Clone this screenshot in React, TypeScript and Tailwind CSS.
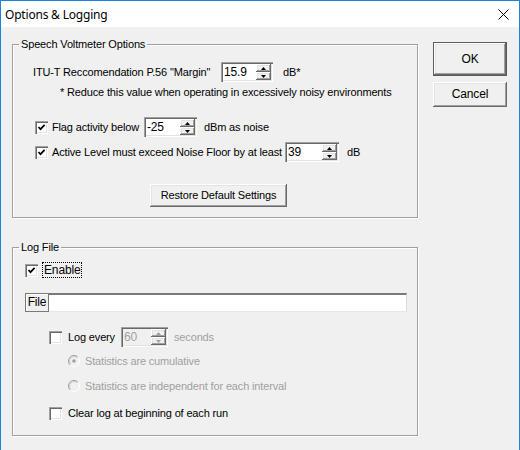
import React from "react";

const sunken =
  "shadow-[inset_1px_1px_0_#a0a0a0,inset_2px_2px_0_#696969,inset_-1px_-1px_0_#ffffff,inset_-2px_-2px_0_#e3e3e3]";
const raised =
  "shadow-[inset_-1px_-1px_0_#696969,inset_1px_1px_0_#ffffff,inset_-2px_-2px_0_#a0a0a0,inset_2px_2px_0_#e3e3e3]";

function Check({ on = false }: { on?: boolean }) {
  return (
    <span className={`flex h-[13px] w-[13px] shrink-0 items-center justify-center bg-white ${sunken}`}>
      {on && (
        <svg width="9" height="9" viewBox="0 0 9 9">
          <path d="M1.5 4 L3.5 6.2 L7.6 1.8" fill="none" stroke="#000" strokeWidth="1.7" />
        </svg>
      )}
    </span>
  );
}

function Radio({ on = false }: { on?: boolean }) {
  return (
    <svg width="12" height="12" viewBox="0 0 12 12" className="shrink-0">
      <circle cx="6" cy="6" r="5.5" fill="#f0f0f0" />
      <path d="M2.1 9.9 A5.5 5.5 0 0 1 9.9 2.1" fill="none" stroke="#a0a0a0" />
      <path d="M9.9 2.1 A5.5 5.5 0 0 1 2.1 9.9" fill="none" stroke="#ffffff" />
      <path d="M2.8 9.2 A4.5 4.5 0 0 1 9.2 2.8" fill="none" stroke="#c8c8c8" />
      {on && <circle cx="6" cy="6" r="1.8" fill="#a0a0a0" />}
    </svg>
  );
}

function Arrow({ up }: { up?: boolean }) {
  return (
    <svg width="5" height="3" viewBox="0 0 5 3">
      <path d={up ? "M2.5 0 L5 3 L0 3 Z" : "M0 0 L5 0 L2.5 3 Z"} fill="currentColor" />
    </svg>
  );
}

function Spin({ value, w = "w-[53px]", off = false }: { value: string; w?: string; off?: boolean }) {
  return (
    <div className={`flex h-[20px] shrink-0 p-[2px] ${w} ${off ? "bg-[#f0f0f0] text-[#a0a0a0]" : "bg-white text-black"} ${sunken}`}>
      <span className="flex-1 pl-[1px] text-[12px] leading-[16px]">{value}</span>
      <div className={`flex w-[15px] flex-col ${off ? "text-[#a0a0a0]" : "text-black"}`}>
        <span className={`flex flex-1 items-center justify-center bg-[#f0f0f0] ${raised}`}>
          <Arrow up />
        </span>
        <span className={`flex flex-1 items-center justify-center bg-[#f0f0f0] ${raised}`}>
          <Arrow />
        </span>
      </div>
    </div>
  );
}

function Group({ title, className, children }: { title: string; className: string; children: React.ReactNode }) {
  return (
    <fieldset className={`w-[406px] border border-[#a0a0a0] shadow-[1px_1px_0_#ffffff,inset_1px_1px_0_#ffffff] ${className}`}>
      <legend className="ml-[6px] px-[2px] leading-[13px]">{title}</legend>
      {children}
    </fieldset>
  );
}

export default function App() {
  return (
    <div className="flex h-[450px] w-[520px] flex-col overflow-hidden border-x border-t border-[#1883d7] bg-[#f0f0f0] font-['Liberation_Sans',Arial,sans-serif] text-[11px] leading-[13px] tracking-[-0.15px] text-black">
      <div className="flex h-[26px] shrink-0 items-center justify-between bg-white pl-[4px] pr-[10px]">
        <span className="font-['Noto_Sans',sans-serif] text-[12px] tracking-[-0.2px]">Options &amp; Logging</span>
        <svg width="11" height="11" viewBox="0 0 11 11">
          <path d="M0.5 0.5 L10.5 10.5 M10.5 0.5 L0.5 10.5" stroke="#000" strokeWidth="1" />
        </svg>
      </div>

      <div className="flex flex-1 pl-[11px]">
        <div className="flex flex-col">
          <Group title="Speech Voltmeter Options" className="mt-[11px] pb-[10px]">
            <div className="mt-[11px] flex h-[20px] items-center pl-[20px]">
              <span className="w-[188px]">ITU-T Reccomendation P.56 "Margin"</span>
              <Spin value="15.9" w="w-[52px]" />
              <span className="ml-[10px]">dB*</span>
            </div>
            <div className="mt-[4px] pl-[47px]">
              * Reduce this value when operating in excessively noisy environments
            </div>
            <div className="mt-[18px] flex h-[20px] items-center pl-[22px]">
              <Check on />
              <span className="ml-[4px] w-[92px]">Flag activity below</span>
              <Spin value="-25" />
              <span className="ml-[7px]">dBm as noise</span>
            </div>
            <div className="mt-[5px] flex h-[20px] items-center pl-[22px]">
              <Check on />
              <span className="ml-[4px] w-[233px] whitespace-nowrap">
                Active Level must exceed Noise Floor by at least
              </span>
              <Spin value="39" w="w-[54px]" />
              <span className="ml-[8px]">dB</span>
            </div>
            <button className={`ml-[137px] mt-[22px] h-[23px] w-[137px] bg-[#f0f0f0] ${raised}`}>
              Restore Default Settings
            </button>
          </Group>

          <Group title="Log File" className="mt-[23px] pb-[15px]">
            <div className="mt-[8px] flex h-[16px] items-center pl-[12px]">
              <Check on />
              <span className="ml-[4px] border border-dotted border-black px-[1px] text-[12px] leading-[14px]">Enable</span>
            </div>
            <div className="mt-[15px] flex h-[19px] pl-[12px]">
              <span className="flex w-[24px] items-center justify-center border border-[#7a7a7a] bg-[#f0f0f0] text-[12px] shadow-[inset_1px_1px_0_#ffffff]">
                File
              </span>
              <div className="w-[358px] border-t-2 border-[#7a7a7a] border-r border-b border-r-[#dcdcdc] border-b-[#e8e8e8] bg-white" />
            </div>
            <div className="mt-[15px] flex h-[20px] items-center pl-[36px]">
              <Check />
              <span className="ml-[6px] w-[53px]">Log every</span>
              <Spin value="60" w="w-[47px]" off />
              <span className="ml-[6px] text-[#a0a0a0]">seconds</span>
            </div>
            <div className="mt-[7px] flex h-[14px] items-center gap-[5px] pl-[55px] text-[#a0a0a0]">
              <Radio on />
              <span>Statistics are cumulative</span>
            </div>
            <div className="mt-[11px] flex h-[14px] items-center gap-[5px] pl-[55px] text-[#a0a0a0]">
              <Radio />
              <span>Statistics are independent for each interval</span>
            </div>
            <div className="mt-[13px] flex h-[14px] items-center pl-[36px]">
              <Check />
              <span className="ml-[6px]">Clear log at beginning of each run</span>
            </div>
          </Group>
        </div>

        <div className="ml-[15px] mt-[15px] flex flex-col gap-[6px]">
          <button className={`h-[34px] w-[74px] border border-[#5a5a5a] bg-[#f0f0f0] text-[12px] ${raised}`}>OK</button>
          <button className={`h-[25px] w-[74px] bg-[#f0f0f0] text-[12px] ${raised}`}>Cancel</button>
        </div>
      </div>
    </div>
  );
}
